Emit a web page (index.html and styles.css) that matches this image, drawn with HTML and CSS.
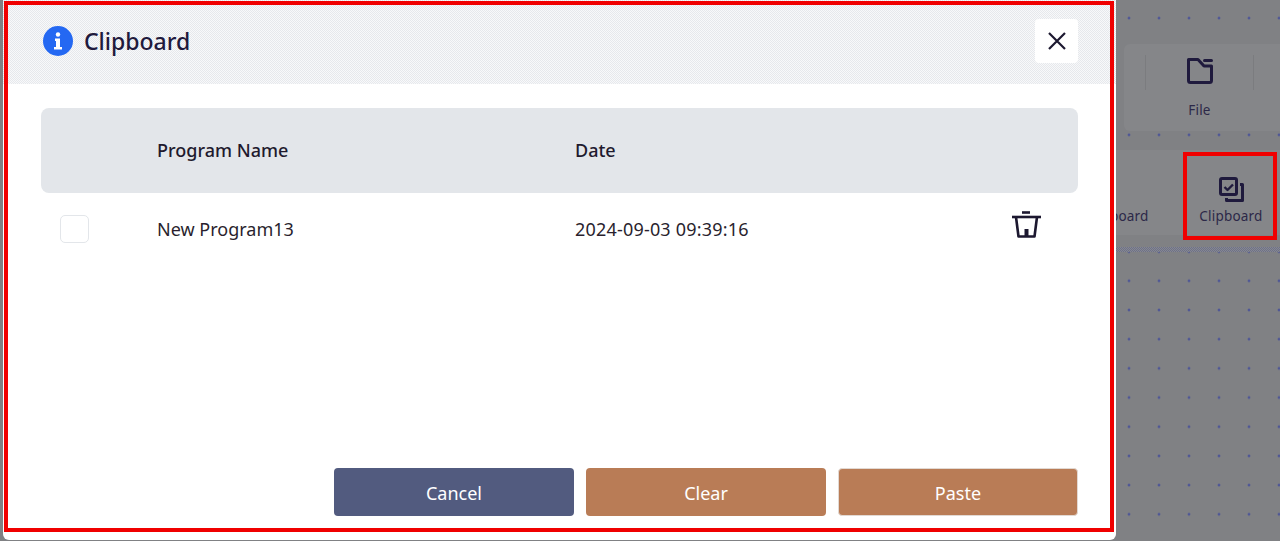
FILE: index.html
```html
<!DOCTYPE html>
<html lang="en">
<head>
<meta charset="utf-8">
<title>Clipboard</title>
<link rel="stylesheet" href="styles.css">
</head>
<body>
<div class="backdrop">
  <div class="card card-file">
    <div class="tool tool-file">
      <svg class="tool-icon" viewBox="0 0 26 26" width="26" height="26" fill="none" stroke="#1f1a3d" stroke-width="3" stroke-linejoin="round" stroke-linecap="round"><path d="M1.500 1.500H11l6 6.500h7.500v14.500a2 2 0 0 1-2 2h-19a2 2 0 0 1-2-2z"/><path d="M17.500 2.500h7"/></svg>
      <span class="tool-label">File</span>
    </div>
  </div>
  <div class="card card-board">
    <div class="tool tool-board">
      <span class="tool-label">Clipboard</span>
    </div>
    <div class="tool tool-board">
      <svg class="tool-icon" viewBox="0 0 25 25" width="25" height="25" fill="none" stroke="#1f1a3d" stroke-width="3" stroke-linejoin="round"><rect x="1.500" y="1.500" width="16" height="16" rx="1.500"/><path d="M21 7.500h2.500v16h-16V21"/><path d="M5.500 10l3 3 5.500-5.500" stroke-width="2.400"/></svg>
      <span class="tool-label">Clipboard</span>
    </div>
  </div>
  <div class="ruler"></div>
</div>

<div class="mark mark-tool"></div>

<section class="modal">
  <header class="modal-head">
    <div class="modal-title">
      <svg viewBox="0 0 30 30" width="30" height="30"><circle cx="15" cy="15" r="15" fill="#2468f2"/><circle cx="15" cy="8.500" r="2.200" fill="#fff"/><path d="M12 12.500h5v8.500h2v2.500h-8V21h2v-6h-1z" fill="#fff"/></svg>
      <h1>Clipboard</h1>
    </div>
    <button class="close" type="button" aria-label="Close">
      <svg viewBox="0 0 18 18" width="18" height="18" fill="none" stroke="#1c1830" stroke-width="2.200"><path d="M1 1l16 16M17 1L1 17"/></svg>
    </button>
  </header>

  <div class="modal-body">
    <div class="row row-head">
      <span></span>
      <span>Program Name</span>
      <span>Date</span>
      <span></span>
    </div>
    <div class="row row-item">
      <span class="check"></span>
      <span>New Program13</span>
      <span class="date">2024-09-03 09:39:16</span>
      <svg class="trash" viewBox="0 0 30 30" width="30" height="30" fill="none" stroke="#1c1830" stroke-width="2.600" stroke-linejoin="round"><path d="M11 2.500h8"/><path d="M1 7h29"/><path d="M5 7l2.500 19.500h16L26 7"/><path d="M15.500 19v7.500" stroke-width="4"/></svg>
    </div>
    <footer class="actions">
      <button class="btn btn-cancel" type="button">Cancel</button>
      <button class="btn btn-accent" type="button">Clear</button>
      <button class="btn btn-accent btn-outlined" type="button">Paste</button>
    </footer>
  </div>
</section>

<div class="mark mark-modal"></div>
</body>
</html>
```
FILE: styles.css
```css
* { box-sizing: border-box; }

html, body {
  margin: 0;
  height: 100%;
  overflow: hidden;
}

body {
  font-family: "Noto Sans", "Open Sans", sans-serif;
  color: #1f1a2e;
  background-color: #808184;
}

.backdrop {
  position: absolute;
  inset: 0;
  background-image: radial-gradient(circle, #4f5796 0 1.200px, transparent 1.700px);
  background-size: 30px 29.200px;
  background-position: 1114px 3.500px;
}

.card {
  position: absolute;
  background: #858689;
  display: flex;
}

.card-file {
  left: 1124px;
  top: 44px;
  width: 156px;
  height: 87px;
  border-radius: 6px 0 0 6px;
  padding-left: 21px;
}

.card-board {
  left: 1040px;
  top: 150px;
  width: 240px;
  height: 85px;
  justify-content: flex-end;
  gap: 22px;
  padding-right: 3px;
}

.tool {
  display: flex;
  flex-direction: column;
  align-items: center;
}

.tool-file {
  position: relative;
  width: 109px;
  padding-top: 14px;
  gap: 17px;
}

.tool-file::before,
.tool-file::after {
  content: "";
  position: absolute;
  top: 11px;
  height: 35px;
  width: 1px;
  background: #7b7c7f;
}

.tool-file::before { left: 0; }
.tool-file::after { right: 0; }

.tool-board {
  width: 92px;
  justify-content: flex-end;
  padding-bottom: 10px;
  gap: 5px;
}

.tool-label {
  font-size: 13.500px;
  line-height: 18px;
  letter-spacing: 0.2px;
  color: #2c2848;
}

.ruler {
  position: absolute;
  left: 1116px;
  right: 0;
  top: 247px;
  height: 5px;
  background-image: repeating-conic-gradient(#6c708c 0 25%, #88898c 0 50%);
  background-size: 2px 2px;
}

.mark {
  position: absolute;
  border: 4px solid #f00000;
  pointer-events: none;
}

.mark-tool {
  left: 1183px;
  top: 152px;
  width: 94px;
  height: 88px;
}

.mark-modal {
  left: 4px;
  top: 1px;
  width: 1110px;
  height: 531px;
}

.modal {
  position: absolute;
  left: 3px;
  top: 0;
  width: 1113px;
  height: 540px;
  background: #fff;
  border-radius: 0 0 6px 6px;
  display: flex;
  flex-direction: column;
}

.modal-head {
  height: 84px;
  flex: none;
  padding: 19px 38px 0 40px;
  display: flex;
  justify-content: space-between;
  align-items: flex-start;
  background-color: #eef0f2;
  background-image: repeating-conic-gradient(#e6e8ec 0 25%, #f8f9fa 0 50%);
  background-size: 2px 2px;
}

.modal-title {
  display: flex;
  align-items: center;
  gap: 11px;
  height: 44px;
}

.modal-title h1 {
  margin: 0;
  font-size: 23px;
  font-weight: 500;
  line-height: 30px;
  color: #1f1a3d;
}

.close {
  width: 43px;
  height: 44px;
  padding: 0;
  border: 0;
  border-radius: 4px;
  background: #fff;
  display: flex;
  align-items: center;
  justify-content: center;
}

.modal-body {
  flex: 1;
  padding: 24px 38px 24px;
  display: flex;
  flex-direction: column;
}

.row {
  display: grid;
  grid-template-columns: 116px 418px 1fr 30px;
  align-items: center;
  font-size: 18px;
  padding-right: 37px;
}

.row-head {
  height: 85px;
  padding-bottom: 2px;
  background: #e3e6ea;
  border-radius: 8px;
  font-weight: 500;
  color: #1f1a2e;
}

.row-item {
  height: 72px;
  color: #2a1f2e;
}

.date {
  letter-spacing: 0.190px;
}

.check {
  display: block;
  margin-left: 19px;
  width: 29px;
  height: 28px;
  border: 1px solid #e3e6ea;
  border-radius: 5px;
  background: #fff;
}

.trash {
  transform: translateY(-4px);
}

.actions {
  margin-top: auto;
  display: flex;
  justify-content: flex-end;
  gap: 12px;
}

.btn {
  width: 240px;
  height: 48px;
  padding: 2px 0 0;
  border: 0;
  border-radius: 4px;
  color: #fff;
  font-family: inherit;
  font-size: 18px;
}

.btn-cancel { background: #525b7f; }
.btn-accent { background: #b97c56; }
.btn-outlined { border: 1px solid #e2d9d3; }
```
